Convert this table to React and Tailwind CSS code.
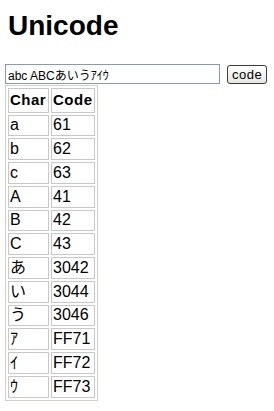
const rows = [
  ["a", "61"], ["b", "62"], ["c", "63"],
  ["A", "41"], ["B", "42"], ["C", "43"],
  ["あ", "3042"], ["い", "3044"], ["う", "3046"],
  ["ｱ", "FF71"], ["ｲ", "FF72"], ["ｳ", "FF73"],
];

const font = { fontFamily: '"Liberation Sans", "Noto Sans CJK JP", sans-serif' };

export default function App() {
  return (
    <div className="min-h-screen bg-white text-black px-[5px]" style={font}>
      <h1 className="text-[28px] font-bold leading-none pt-[12px] pl-[3px]">Unicode</h1>
      <div className="flex items-center gap-[7px] mt-[24px]">
        <input
          defaultValue="abc ABCあいうｱｲｳ"
          className="w-[215px] h-[20px] border border-[#7f9db9] px-[2px] text-[12px] outline-none"
        />
        <button className="h-[19px] px-[4px] text-[13px] tracking-[0.5px] border border-[#3c3c3c] rounded-[3px] bg-gradient-to-b from-white to-[#e6e6e0] leading-none">
          code
        </button>
      </div>
      <table className="mt-[1px] border border-[#d4d0c8] border-separate border-spacing-[2px] text-[16px]">
        <thead>
          <tr>
            <th className="w-[41px] h-[21.75px] border border-[#c8c8c8] text-left font-bold px-[1px] text-[15px] tracking-[0.5px]">Char</th>
            <th className="w-[44px] h-[21.75px] border border-[#c8c8c8] text-left font-bold px-[1px] text-[15px] tracking-[0.5px]">Code</th>
          </tr>
        </thead>
        <tbody>
          {rows.map(([c, code]) => (
            <tr key={code}>
              <td className="h-[21.75px] border border-[#c8c8c8] px-[1px] leading-none">{c}</td>
              <td className="h-[21.75px] border border-[#c8c8c8] px-[1px] leading-none">{code}</td>
            </tr>
          ))}
        </tbody>
      </table>
    </div>
  );
}
